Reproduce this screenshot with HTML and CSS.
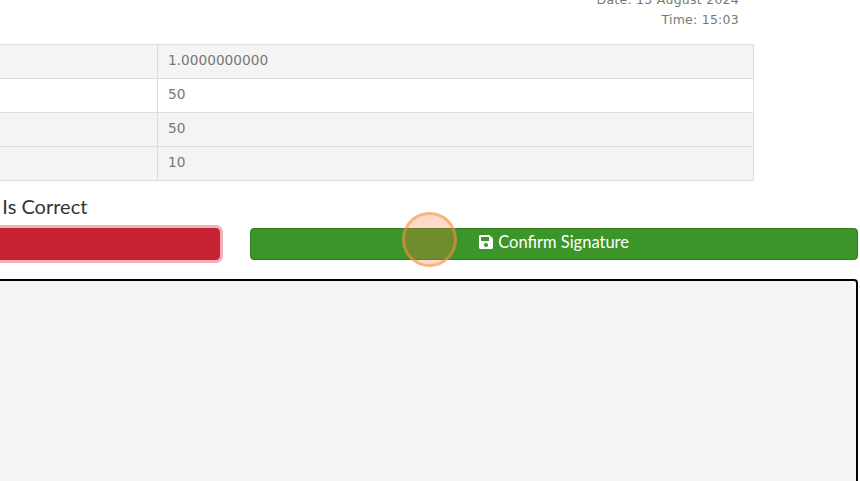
FILE: index.html
```html
<!DOCTYPE html>
<html lang="en">
<head>
<meta charset="utf-8">
<title>Confirm Signature</title>
<link rel="stylesheet" href="styles.css">
</head>
<body>
<main class="page">
  <div class="meta">
    <div>Date: 13 August 2024</div>
    <div>Time: 15:03</div>
  </div>
  <table class="details">
    <tr class="odd"><td class="label"></td><td>1.0000000000</td></tr>
    <tr><td class="label"></td><td>50</td></tr>
    <tr class="odd"><td class="label"></td><td>50</td></tr>
    <tr class="odd"><td class="label"></td><td>10</td></tr>
  </table>
  <h4 class="confirm-title">I Confirm The Details Is Correct</h4>
  <div class="actions">
    <button class="btn btn-clear" type="button"></button>
    <button class="btn btn-confirm" type="button">
      <svg class="icon" viewBox="0 0 448 512" aria-hidden="true"><path fill="currentColor" d="M433.9 129.9l-83.9-83.9A48 48 0 0 0 316.1 32H48C21.5 32 0 53.5 0 80v352c0 26.5 21.5 48 48 48h352c26.5 0 48-21.5 48-48V163.9a48 48 0 0 0-14.1-34zM224 416c-35.3 0-64-28.7-64-64 0-35.3 28.7-64 64-64s64 28.7 64 64c0 35.3-28.7 64-64 64zm96-304.5V212c0 6.6-5.4 12-12 12H76c-6.6 0-12-5.4-12-12V108c0-6.6 5.4-12 12-12h228.5c3.2 0 6.2 1.3 8.5 3.5l3.5 3.5c2.3 2.3 3.5 5.3 3.5 8.5z"/></svg>
      Confirm Signature
    </button>
  </div>
  <div class="signature-pad"></div>
</main>
<div class="click-marker"></div>
</body>
</html>
```

FILE: styles.css
```css
html, body {
  margin: 0;
  height: 481px;
  overflow: hidden;
  background: #fff;
}
.page {
  width: 1246px;
  margin-left: -388px;
  margin-top: -10px;
}
.meta {
  width: 1127px;
  box-sizing: border-box;
  text-align: right;
  font: 12.5px/20px "DejaVu Sans", sans-serif;
  letter-spacing: .25px;
  color: #777;
  height: 54px;
}
.details {
  width: 1142px;
  border-collapse: collapse;
  table-layout: fixed;
  font: 13.7px/17px "DejaVu Sans", sans-serif;
  color: #777;
}
.details td {
  border: 1px solid #ddd;
  height: 34px;
  box-sizing: border-box;
  padding: 7px 10px 9px;
}
.details .label { width: 545px; }
.odd { background: #f4f4f4; }
.confirm-title {
  margin: 13px 0 10px;
  font: 400 20px/24px Lato, sans-serif;
  color: #333;
  padding-left: 200px;
}
.actions {
  display: grid;
  grid-template-columns: 608px 608px;
  gap: 30px;
}
.btn {
  height: 32px;
  border-radius: 4px;
  border: 1px solid transparent;
  font: 16.5px/20px Lato, sans-serif;
  color: #fff;
  padding: 0 0 5px;
}
.btn-clear {
  background: #c82333;
  border-color: #bd2130;
  box-shadow: 0 0 0 3px rgba(225, 83, 97, .45);
}
.btn-confirm {
  background: #3b9528;
  border-color: #2f7a1c;
}
.icon {
  width: 14px;
  height: 16px;
  vertical-align: -2px;
  margin-right: 1px;
}
.signature-pad {
  margin-top: 19px;
  height: 300px;
  background: #f5f5f5;
  border: 2px solid #000;
  border-radius: 4px;
  box-sizing: border-box;
}
.click-marker {
  position: absolute;
  left: 402px;
  top: 212px;
  width: 55px;
  height: 55px;
  box-sizing: border-box;
  border-radius: 50%;
  border: 3px solid rgba(240, 150, 70, .55);
  background: rgba(255, 120, 60, .27);
}
```
